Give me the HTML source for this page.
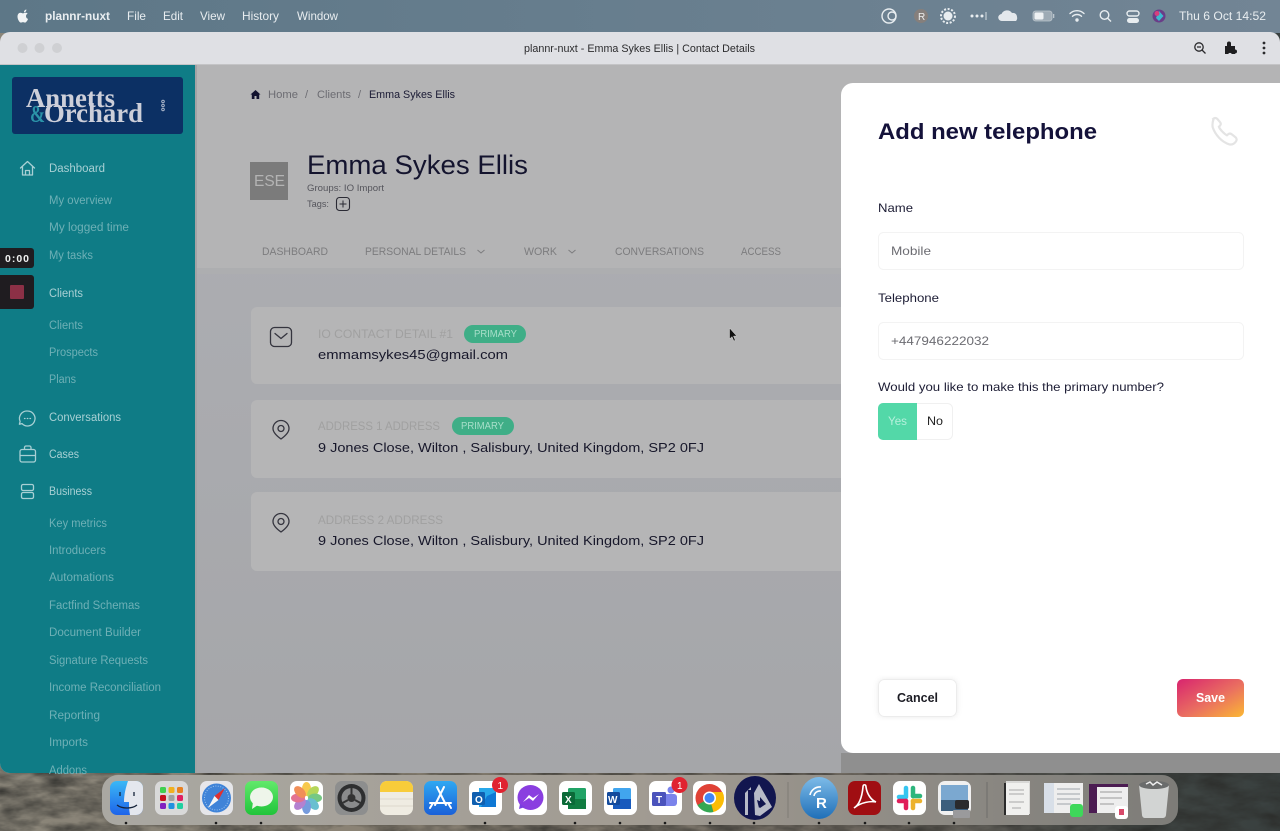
<!DOCTYPE html>
<html lang="en"><head><meta charset="utf-8"><title>plannr-nuxt - Emma Sykes Ellis | Contact Details</title>
<style>
html,body{margin:0;padding:0;width:1280px;height:831px;overflow:hidden;background:#555}
svg{display:block}
text{font-family:"Liberation Sans",sans-serif}
.m{font-size:12px;fill:#e8edf0}
.s1{font-size:11.5px;fill:#a8d0d4}
.s2{font-size:11.5px;fill:#6eb0b6}
.tab{font-size:11px;fill:#7c7c7e}
.lab{font-size:11.5px;fill:#a0a0a0}
.val{font-size:13px;fill:#17172a}
.bad{font-size:10px;fill:#a8dfca}
.f{font-size:12px;fill:#1c1c34}
.ph{font-size:12px;fill:#6c6c72}
.ic{fill:none;stroke:#a8d0d4;stroke-width:1.3;stroke-linejoin:round;stroke-linecap:round}
.ic2{fill:none;stroke:#35353f;stroke-width:1.3;stroke-linejoin:round;stroke-linecap:round}
.mi{fill:none;stroke:#e8edf0;stroke-width:1.4}
</style></head><body>
<svg width="1280" height="831" viewBox="0 0 1280 831" xmlns="http://www.w3.org/2000/svg">
<defs>
<linearGradient id="bar" x1="0" x2="1" y1="0" y2="0"><stop offset="0" stop-color="#5d7787"/><stop offset="1" stop-color="#728595"/></linearGradient>
<linearGradient id="wall" x1="0" x2="1" y1="0" y2="0"><stop offset="0" stop-color="#8a8579"/><stop offset=".3" stop-color="#8a8274"/><stop offset=".7" stop-color="#6d675f"/><stop offset=".9" stop-color="#3f4543"/><stop offset="1" stop-color="#39403f"/></linearGradient>
<linearGradient id="dock" x1="0" x2="1" y1="0" y2="0"><stop offset="0" stop-color="#aaa8a2"/><stop offset=".5" stop-color="#a19b92"/><stop offset="1" stop-color="#7d7c78"/></linearGradient>
<linearGradient id="main" x1="0" x2="0" y1="0" y2="1"><stop offset="0" stop-color="#aeafb4"/><stop offset="1" stop-color="#a5a6a9"/></linearGradient>
<linearGradient id="save" x1="0" x2="1" y1="0" y2="1"><stop offset="0" stop-color="#d8246f"/><stop offset=".55" stop-color="#ea7060"/><stop offset="1" stop-color="#fbb833"/></linearGradient>
<linearGradient id="finder" x1="0" x2="0" y1="0" y2="1"><stop offset="0" stop-color="#3bb8f5"/><stop offset="1" stop-color="#1d63ea"/></linearGradient>
<linearGradient id="grn" x1="0" x2="0" y1="0" y2="1"><stop offset="0" stop-color="#62e96b"/><stop offset="1" stop-color="#20c43a"/></linearGradient>
<linearGradient id="appst" x1="0" x2="0" y1="0" y2="1"><stop offset="0" stop-color="#2fa8f2"/><stop offset="1" stop-color="#1a60d8"/></linearGradient>
<linearGradient id="rr" x1="0" x2="0" y1="0" y2="1"><stop offset="0" stop-color="#7dbbe8"/><stop offset="1" stop-color="#1f6fb8"/></linearGradient>
<filter id="rock" x="0" y="0" width="100%" height="100%" color-interpolation-filters="sRGB"><feTurbulence type="fractalNoise" baseFrequency=".03 .08" numOctaves="4" seed="4"/><feColorMatrix values="0 0 0 0 .16  0 0 0 0 .16  0 0 0 0 .15  .9 .9 0 0 -.6"/></filter>
<filter id="sh" x="-10%" y="-10%" width="120%" height="120%"><feDropShadow dx="0" dy="0" stdDeviation="3" flood-color="#000" flood-opacity=".08"/></filter>
</defs>

<!-- wallpaper -->
<rect width="1280" height="831" fill="url(#wall)"/>
<rect y="760" width="1280" height="71" filter="url(#rock)"/>
<!-- menu bar -->
<rect width="1280" height="33" fill="url(#bar)"/>
<path d="M25.100 12.300c.8-1 1.300-1.400 1.300-2.800-1.300.2-2.500 1.300-2.400 2.800.4.100.8 0 1.100 0zM25.500 12.800c-1.100 0-1.700.6-2.500.6-.9 0-1.600-.6-2.500-.6-1.800 0-3 1.700-3 3.800 0 2.700 2 6 3.500 6 .7 0 1.200-.5 2-.5s1.200.5 2 .5c1.200 0 2.600-2.200 3-3.700-1.300-.5-2-1.500-2-2.800 0-1.200.7-2 1.600-2.600-.6-.7-1.500-.7-2.100-.7z" fill="#f2f4f5"/>
<text x="45" y="20" class="m" style="font-weight:700" textLength="65" lengthAdjust="spacingAndGlyphs">plannr-nuxt</text>
<text x="127" y="20" class="m" textLength="19" lengthAdjust="spacingAndGlyphs">File</text>
<text x="163" y="20" class="m" textLength="20" lengthAdjust="spacingAndGlyphs">Edit</text>
<text x="200" y="20" class="m" textLength="25" lengthAdjust="spacingAndGlyphs">View</text>
<text x="242" y="20" class="m" textLength="37" lengthAdjust="spacingAndGlyphs">History</text>
<text x="297" y="20" class="m" textLength="41" lengthAdjust="spacingAndGlyphs">Window</text>

<g>
<circle cx="889" cy="16" r="7" class="mi"/><circle cx="892" cy="16" r="4" class="mi"/>
<circle cx="921" cy="16" r="7" fill="#857f7c"/><text x="918" y="20" font-size="10" fill="#eee">R</text>
<circle cx="948" cy="16" r="4.500" fill="#e8edf0"/><circle cx="948" cy="16" r="7" fill="none" stroke="#e8edf0" stroke-width="2" stroke-dasharray="2 1.600"/>
<circle cx="972" cy="16" r="1.500" fill="#e8edf0"/><circle cx="977" cy="16" r="1.500" fill="#e8edf0"/><circle cx="982" cy="16" r="1.500" fill="#e8edf0"/><rect x="985.500" y="12" width="1" height="8" fill="#d5dde2"/>
<path d="M1002 21a3.500 3.500 0 0 1-.5-7 6 6 0 0 1 10.500-1 4 4 0 0 1 5 4 4 4 0 0 1-1 4z" fill="#e4e8ec"/>
<rect x="1033" y="11" width="19" height="10" rx="2.500" fill="#9eabb5" stroke="#bcc6cd" stroke-width=".8"/><rect x="1034.500" y="12.500" width="9" height="7" rx="1.500" fill="#eef1f3"/><rect x="1053" y="14" width="1.300" height="4" fill="#bcc6cd"/>
<path d="M1070 13.500a10 10 0 0 1 14 0M1072.500 16.300a6.500 6.500 0 0 1 9 0" class="mi" stroke-linecap="round"/><circle cx="1077" cy="20" r="1.700" fill="#e8edf0"/>
<circle cx="1104.500" cy="15" r="4.300" class="mi"/><path d="M1107.700 18.200l3.300 3.300" class="mi"/>
<rect x="1127" y="11" width="12" height="5" rx="2.500" class="mi"/><rect x="1127" y="18" width="12" height="5" rx="2.500" fill="#e8edf0"/>
<circle cx="1159" cy="16" r="6.500" fill="#6a3d88"/><path d="M1159 11l4.500 5-4.500 5-3-3z" fill="#3dbad0"/><circle cx="1157" cy="13.500" r="2.500" fill="#d63f7e"/>
<text x="1179" y="20" class="m" textLength="87" lengthAdjust="spacingAndGlyphs" style="font-size:11.500px">Thu 6 Oct  14:52</text>
</g>

<!-- window -->
<path d="M0 42a10 10 0 0 1 10-10H1270a10 10 0 0 1 10 10V765a8 8 0 0 1-8 8H10a10 10 0 0 1-10-10z" fill="#dfe0e4"/>
<rect y="64" width="1280" height="1" fill="#c4c4c6"/>
<circle cx="22.500" cy="48" r="5" fill="#cfd0d3"/><circle cx="39.500" cy="48" r="5" fill="#cfd0d3"/><circle cx="57" cy="48" r="5" fill="#cfd0d3"/>
<text x="524" y="52" font-size="11" fill="#2c2c2e" textLength="231" lengthAdjust="spacingAndGlyphs">plannr-nuxt - Emma Sykes Ellis | Contact Details</text>
<g fill="none" stroke="#2a2a2c" stroke-width="1.300"><circle cx="1199" cy="47" r="4.200"/><path d="M1202 50l3.500 3.500M1197 47h4"/></g>
<path d="M1225 46h2v-2.500a2 2 0 0 1 4 0V46h4v3.500a2 2 0 0 1 0 4V54h-3.200a2 2 0 0 0-3.600 0H1225z" fill="#1e1e20"/>
<circle cx="1264" cy="43" r="1.400" fill="#2a2a2c"/><circle cx="1264" cy="48" r="1.400" fill="#2a2a2c"/><circle cx="1264" cy="53" r="1.400" fill="#2a2a2c"/>

<!-- main -->
<path d="M195 65H1280V765a8 8 0 0 1-8 8H195z" fill="url(#main)"/>
<rect x="195" y="65" width="1085" height="203" fill="#b4b4b5"/>
<rect x="195" y="268" width="646" height="6" fill="#adaeb0"/>
<!-- sidebar -->
<path d="M0 65H195V773H10a10 10 0 0 1-10-10z" fill="#0f7c86"/>
<rect x="195" y="65" width="2" height="708" fill="#a3a3a5"/>
<rect x="12" y="77" width="171" height="57" rx="3" fill="#0c3064"/>
<text x="26" y="107" font-size="27" font-weight="700" style="font-family:'Liberation Serif',serif" fill="#cdcfd9" textLength="89" lengthAdjust="spacingAndGlyphs">Annetts</text>
<text x="30" y="122" font-size="24" font-weight="700" style="font-family:'Liberation Serif',serif" fill="#2b93a8" textLength="15" lengthAdjust="spacingAndGlyphs">&amp;</text>
<text x="44" y="122" font-size="27" font-weight="700" style="font-family:'Liberation Serif',serif" fill="#cdcfd9" textLength="99" lengthAdjust="spacingAndGlyphs">Orchard</text>
<g fill="none" stroke="#b9c2d2" stroke-width=".9"><circle cx="163" cy="101.500" r="1.300"/><circle cx="163" cy="105.500" r="1.300"/><circle cx="163" cy="109.500" r="1.300"/></g>

<path d="M20.500 168l7-6.500 7 6.500M22.500 166.500V175h10v-8.500M25.500 175v-4.500h4V175" class="ic"/>
<path d="M27.500 411a7.500 7.500 0 1 1-5.500 12.600l-2.600.6.7-2.700A7.500 7.500 0 0 1 27.500 411z" class="ic"/><path d="M24.500 418.500h.5M27.300 418.500h.5M30 418.500h.5" class="ic"/>
<path d="M20 451.500a2 2 0 0 1 2-2h11.500a2 2 0 0 1 2 2v8.500a2 2 0 0 1-2 2H22a2 2 0 0 1-2-2zM24.500 449.500v-2a1.500 1.500 0 0 1 1.500-1.500h3.500a1.500 1.500 0 0 1 1.500 1.500v2M20 455.500h15.500" class="ic"/>
<rect x="21.500" y="484.500" width="12" height="6" rx="1.500" class="ic"/><rect x="21.500" y="492.500" width="12" height="6" rx="1.500" class="ic"/>

<text x="49" y="172" class="s1" textLength="56" lengthAdjust="spacingAndGlyphs">Dashboard</text>
<text x="49" y="204" class="s2" textLength="63" lengthAdjust="spacingAndGlyphs">My overview</text>
<text x="49" y="231" class="s2" textLength="80" lengthAdjust="spacingAndGlyphs">My logged time</text>
<text x="49" y="259" class="s2" textLength="44" lengthAdjust="spacingAndGlyphs">My tasks</text>
<text x="49" y="297" class="s1" textLength="34" lengthAdjust="spacingAndGlyphs">Clients</text>
<text x="49" y="329" class="s2" textLength="34" lengthAdjust="spacingAndGlyphs">Clients</text>
<text x="49" y="356" class="s2" textLength="49" lengthAdjust="spacingAndGlyphs">Prospects</text>
<text x="49" y="383" class="s2" textLength="27" lengthAdjust="spacingAndGlyphs">Plans</text>
<text x="49" y="421" class="s1" textLength="72" lengthAdjust="spacingAndGlyphs">Conversations</text>
<text x="49" y="458" class="s1" textLength="30" lengthAdjust="spacingAndGlyphs">Cases</text>
<text x="49" y="495" class="s1" textLength="43" lengthAdjust="spacingAndGlyphs">Business</text>
<text x="49" y="527" class="s2" textLength="58" lengthAdjust="spacingAndGlyphs">Key metrics</text>
<text x="49" y="554" class="s2" textLength="57" lengthAdjust="spacingAndGlyphs">Introducers</text>
<text x="49" y="581" class="s2" textLength="65" lengthAdjust="spacingAndGlyphs">Automations</text>
<text x="49" y="609" class="s2" textLength="91" lengthAdjust="spacingAndGlyphs">Factfind Schemas</text>
<text x="49" y="636" class="s2" textLength="92" lengthAdjust="spacingAndGlyphs">Document Builder</text>
<text x="49" y="664" class="s2" textLength="99" lengthAdjust="spacingAndGlyphs">Signature Requests</text>
<text x="49" y="691" class="s2" textLength="112" lengthAdjust="spacingAndGlyphs">Income Reconciliation</text>
<text x="49" y="719" class="s2" textLength="51" lengthAdjust="spacingAndGlyphs">Reporting</text>
<text x="49" y="746" class="s2" textLength="39" lengthAdjust="spacingAndGlyphs">Imports</text>
<text x="49" y="774" class="s2" textLength="38" lengthAdjust="spacingAndGlyphs">Addons</text>

<!-- recorder overlay -->
<rect x="-4" y="248" width="38" height="20" rx="3" fill="#1f1c20"/>
<text x="5" y="262" font-size="10.500" font-weight="700" fill="#f0f0f0" textLength="24">0:00</text>
<rect x="-4" y="275" width="38" height="34" rx="3" fill="#1f1c20"/>
<rect x="10" y="285" width="14" height="14" rx="1" fill="#8c3046"/>

<!-- breadcrumb -->
<path d="M250.500 94.500l5-4.500 5 4.500h-1.300V99h-2.700v-3h-2v3h-2.700v-4.500z" fill="#13132f"/>
<text x="268" y="98" font-size="11" fill="#6c6c72" textLength="30" lengthAdjust="spacingAndGlyphs">Home</text>
<text x="305" y="98" font-size="11" fill="#6c6c72">/</text>
<text x="317" y="98" font-size="11" fill="#6c6c72" textLength="34" lengthAdjust="spacingAndGlyphs">Clients</text>
<text x="358" y="98" font-size="11" fill="#6c6c72">/</text>
<text x="369" y="98" font-size="11" fill="#1a1a34" textLength="86" lengthAdjust="spacingAndGlyphs">Emma Sykes Ellis</text>
<!-- header -->
<rect x="250" y="162" width="38" height="38" fill="#7b7b7b"/>
<text x="254" y="186" font-size="15.500" fill="#b4b4b4" textLength="31" lengthAdjust="spacingAndGlyphs">ESE</text>
<text x="307" y="174" font-size="27" fill="#14142e" textLength="221" lengthAdjust="spacingAndGlyphs">Emma Sykes Ellis</text>
<text x="307" y="191" font-size="9.500" fill="#55555c" textLength="77" lengthAdjust="spacingAndGlyphs">Groups: IO Import</text>
<text x="307" y="207" font-size="9.500" fill="#55555c" textLength="22" lengthAdjust="spacingAndGlyphs">Tags:</text>
<rect x="336.500" y="197.500" width="13" height="13" rx="3" fill="none" stroke="#2a2a34" stroke-width="1.100"/>
<path d="M343 200.500v7M339.500 204h7" stroke="#2a2a34" stroke-width="1"/>
<!-- tabs -->
<text x="262" y="255" class="tab" textLength="66" lengthAdjust="spacingAndGlyphs">DASHBOARD</text>
<text x="365" y="255" class="tab" textLength="101" lengthAdjust="spacingAndGlyphs">PERSONAL DETAILS</text>
<path d="M477.500 250l3.500 3 3.500-3" fill="none" stroke="#7c7c7e"/>
<text x="524" y="255" class="tab" textLength="33" lengthAdjust="spacingAndGlyphs">WORK</text>
<path d="M568.500 250l3.500 3 3.500-3" fill="none" stroke="#7c7c7e"/>
<text x="615" y="255" class="tab" textLength="89" lengthAdjust="spacingAndGlyphs">CONVERSATIONS</text>
<text x="741" y="255" class="tab" textLength="40" lengthAdjust="spacingAndGlyphs">ACCESS</text>
<!-- cards -->
<rect x="251" y="307" width="600" height="77" rx="6" fill="#b5b5b6"/>
<rect x="251" y="400" width="600" height="78" rx="6" fill="#b5b5b6"/>
<rect x="251" y="492" width="600" height="79" rx="6" fill="#b5b5b6"/>
<rect x="270.500" y="327.500" width="21" height="19" rx="4" class="ic2"/><path d="M275 333.500l6 5 6-5" class="ic2"/>
<path d="M281 420.500a8 8 0 0 1 8 8c0 4.500-4.500 8-8 10.500-3.500-2.500-8-6-8-10.500a8 8 0 0 1 8-8z" class="ic2"/><circle cx="281" cy="428.500" r="3" class="ic2"/>
<path d="M281 513.500a8 8 0 0 1 8 8c0 4.500-4.500 8-8 10.500-3.500-2.500-8-6-8-10.500a8 8 0 0 1 8-8z" class="ic2"/><circle cx="281" cy="521.500" r="3" class="ic2"/>
<text x="318" y="338" class="lab" textLength="135" lengthAdjust="spacingAndGlyphs">IO CONTACT DETAIL #1</text>
<rect x="464" y="325" width="62" height="18" rx="9" fill="#3fae87"/>
<text x="474" y="337" class="bad" textLength="43" lengthAdjust="spacingAndGlyphs">PRIMARY</text>
<text x="318" y="359" class="val" textLength="190" lengthAdjust="spacingAndGlyphs">emmamsykes45@gmail.com</text>
<text x="318" y="430" class="lab" textLength="122" lengthAdjust="spacingAndGlyphs">ADDRESS 1 ADDRESS</text>
<rect x="452" y="417" width="62" height="18" rx="9" fill="#3fae87"/>
<text x="461" y="429" class="bad" textLength="43" lengthAdjust="spacingAndGlyphs">PRIMARY</text>
<text x="318" y="452" class="val" textLength="386" lengthAdjust="spacingAndGlyphs">9 Jones Close, Wilton , Salisbury, United Kingdom, SP2 0FJ</text>
<text x="318" y="524" class="lab" textLength="125" lengthAdjust="spacingAndGlyphs">ADDRESS 2 ADDRESS</text>
<text x="318" y="545" class="val" textLength="386" lengthAdjust="spacingAndGlyphs">9 Jones Close, Wilton , Salisbury, United Kingdom, SP2 0FJ</text>
<!-- cursor -->
<path d="M729.500 328v11l2.500-2.300 1.800 4.300 1.500-.7-1.800-4.200h3.300z" fill="#111" stroke="#ddd" stroke-width=".5"/>

<!-- slide-over panel -->
<rect x="841" y="753" width="439" height="20" fill="#8f8f8f"/>
<path d="M853 83H1280V753H853a12 12 0 0 1-12-12V95a12 12 0 0 1 12-12z" fill="#fff"/>
<text x="878" y="139" font-size="22" font-weight="700" fill="#14123a" textLength="219" lengthAdjust="spacingAndGlyphs">Add new telephone</text>
<path d="M1212.500 119.500c1.500-1.800 3.500-2 4.800-.6l2.800 3.300c1 1.200.8 2.500-.2 3.600l-1 1c1 2.500 5 7 8 8.500l1.200-1c1.200-.9 2.500-1 3.600 0l3.800 3c1.500 1.200 1.500 3 .2 4.500-1.800 2.200-4 3.200-6.500 2.500-7.500-2.300-14-9.500-16.500-17-.6-2.700.2-6.300.8-8.300z" fill="none" stroke="#e4e4e4" stroke-width="2.200"/>
<text x="878" y="212" class="f" textLength="35" lengthAdjust="spacingAndGlyphs">Name</text>
<rect x="878.500" y="232.500" width="365" height="37" rx="5" fill="#fff" stroke="#f3f3f3"/>
<text x="891" y="255" class="ph" textLength="40" lengthAdjust="spacingAndGlyphs">Mobile</text>
<text x="878" y="302" class="f" textLength="61" lengthAdjust="spacingAndGlyphs">Telephone</text>
<rect x="878.500" y="322.500" width="365" height="37" rx="5" fill="#fff" stroke="#f3f3f3"/>
<text x="891" y="345" class="ph" textLength="98" lengthAdjust="spacingAndGlyphs">+447946222032</text>
<text x="878" y="391" class="f" textLength="286" lengthAdjust="spacingAndGlyphs">Would you like to make this the primary number?</text>
<rect x="878.500" y="403.500" width="74" height="36" rx="5" fill="#fff" stroke="#f0f0f0"/>
<path d="M883 403h34v37h-34a5 5 0 0 1-5-5v-27a5 5 0 0 1 5-5z" fill="#53d8a8"/>
<text x="888" y="425" font-size="12" fill="#b5f0dc" textLength="19" lengthAdjust="spacingAndGlyphs">Yes</text>
<text x="927" y="425" font-size="12" fill="#222" textLength="16" lengthAdjust="spacingAndGlyphs">No</text>
<rect x="878.500" y="679.500" width="78" height="37" rx="6" fill="#fff" stroke="#ececec" filter="url(#sh)"/>
<text x="897" y="702" font-size="12.500" font-weight="700" fill="#1c1c24" textLength="41" lengthAdjust="spacingAndGlyphs">Cancel</text>
<rect x="1177" y="679" width="67" height="38" rx="6" fill="url(#save)"/>
<text x="1196" y="702" font-size="12.500" font-weight="700" fill="#fff" textLength="29" lengthAdjust="spacingAndGlyphs">Save</text>

<!-- dock -->
<path d="M118 775H1162a16 16 0 0 1 16 16v18a16 16 0 0 1-16 16H118a16 16 0 0 1-16-16V791a16 16 0 0 1 16-16z" fill="url(#dock)"/>
<rect x="787.500" y="782" width="1" height="36" fill="#7f7b75"/><rect x="986.500" y="782" width="1" height="36" fill="#6f6e6a"/>

<!-- finder -->
<rect x="110" y="781" width="33" height="34" rx="7" fill="url(#finder)"/>
<path d="M128 781h8a7 7 0 0 1 7 7v20a7 7 0 0 1-7 7h-6c-1-5-1-9-1-13h-5c0-8 2-15 4-21z" fill="#e4e7ee"/>
<path d="M117 805c5 4 15 4 20 0M120 792v4M134 792v4" fill="none" stroke="#15233a" stroke-width="1.300"/>
<!-- launchpad -->
<rect x="155" y="781" width="33" height="34" rx="7" fill="#d9d9d9"/>
<g><rect x="160" y="787" width="6" height="6" rx="1.500" fill="#40d050"/><rect x="168.500" y="787" width="6" height="6" rx="1.500" fill="#f0b020"/><rect x="177" y="787" width="6" height="6" rx="1.500" fill="#e88020"/><rect x="160" y="795" width="6" height="6" rx="1.500" fill="#c81020"/><rect x="168.500" y="795" width="6" height="6" rx="1.500" fill="#a0a0a0"/><rect x="177" y="795" width="6" height="6" rx="1.500" fill="#e02060"/><rect x="160" y="803" width="6" height="6" rx="1.500" fill="#8020c0"/><rect x="168.500" y="803" width="6" height="6" rx="1.500" fill="#2090e0"/><rect x="177" y="803" width="6" height="6" rx="1.500" fill="#20d0a0"/></g>
<!-- safari -->
<rect x="200" y="781" width="33" height="34" rx="7" fill="#e6e6ea"/><circle cx="216.500" cy="798" r="14.500" fill="#3f83d8"/><circle cx="216.500" cy="798" r="12" fill="none" stroke="#9cc4ee" stroke-dasharray="1 1.500"/>
<path d="M225 788l-6.500 12-4-4z" fill="#e03030"/><path d="M208 808l6.500-12 4 4z" fill="#f5f5f5"/>
<!-- messages -->
<rect x="245" y="781" width="33" height="34" rx="7" fill="url(#grn)"/><ellipse cx="261.500" cy="797" rx="11.500" ry="9.500" fill="#eef5ea"/><path d="M253 802l-1 7 6-4z" fill="#eef5ea"/>
<!-- photos -->
<rect x="290" y="781" width="33" height="34" rx="7" fill="#fff"/>
<g opacity=".85"><ellipse cx="306.500" cy="789" rx="4.500" ry="7" fill="#f6c02e"/><ellipse cx="313" cy="792" rx="4.500" ry="7" transform="rotate(45 313 792)" fill="#a9cf3e"/><ellipse cx="315" cy="798" rx="7" ry="4.500" fill="#5fbf6e"/><ellipse cx="313" cy="804" rx="4.500" ry="7" transform="rotate(-45 313 804)" fill="#4fb5c8"/><ellipse cx="306.500" cy="807" rx="4.500" ry="7" fill="#5f8ad8"/><ellipse cx="300" cy="804" rx="4.500" ry="7" transform="rotate(45 300 804)" fill="#a86cc8"/><ellipse cx="298" cy="798" rx="7" ry="4.500" fill="#df5a80"/><ellipse cx="300" cy="792" rx="4.500" ry="7" transform="rotate(-45 300 792)" fill="#ee7c3c"/></g>
<!-- system prefs -->
<rect x="335" y="781" width="33" height="34" rx="7" fill="#8d8e8e"/><circle cx="351.500" cy="798" r="14" fill="#2e2f30"/><circle cx="351.500" cy="798" r="10" fill="#8a8b8c"/><circle cx="351.500" cy="798" r="4" fill="#333"/><path d="M351.500 788v6M342.500 803l5.500-3M360.500 803l-5.500-3" stroke="#333" stroke-width="2"/>
<!-- notes -->
<rect x="380" y="781" width="33" height="34" rx="7" fill="#efece2"/><path d="M387 781h19a7 7 0 0 1 7 7v4h-33v-4a7 7 0 0 1 7-7z" fill="#f8cc3a"/><path d="M380 799h33M380 806h33" stroke="#dcd8cc"/>
<!-- appstore -->
<rect x="424" y="781" width="33" height="34" rx="7" fill="url(#appst)"/><path d="M437 787l9 18M444 787l-9 18M430 803h21M448 803l3 5M433 803l-3 5" stroke="#fff" stroke-width="2" stroke-linecap="round" fill="none"/>
<!-- outlook -->
<rect x="469" y="781" width="33" height="34" rx="7" fill="#fff"/><path d="M479 788h17v19h-17z" fill="#28a8ea"/><path d="M487 796l9-4v15h-15z" fill="#0f78d4"/><rect x="472" y="792" width="13" height="13" rx="1.500" fill="#0f5fb0"/><text x="475" y="803" font-size="10" font-weight="700" fill="#fff">O</text>
<circle cx="500" cy="785" r="8" fill="#e02330"/><text x="497.500" y="789" font-size="10" fill="#fff">1</text>
<!-- messenger -->
<rect x="514" y="781" width="33" height="34" rx="7" fill="#fff"/><ellipse cx="530.500" cy="797.500" rx="13" ry="12.500" fill="#8a3ee0"/><path d="M519 809l1-5 5 3z" fill="#7a3ee0"/><path d="M523 802l6-7 4 3 6-4-6 7-4-3z" fill="#fff"/>
<!-- excel -->
<rect x="559" y="781" width="33" height="34" rx="7" fill="#fff"/><rect x="568" y="788" width="18" height="21" rx="1.500" fill="#21a366"/><rect x="568" y="799" width="18" height="10" fill="#107c41"/><rect x="562" y="792" width="13" height="13" rx="1.500" fill="#0b6a38"/><text x="565" y="803" font-size="10" font-weight="700" fill="#fff">X</text>
<!-- word -->
<rect x="604" y="781" width="33" height="34" rx="7" fill="#fff"/><rect x="613" y="788" width="18" height="21" rx="1.500" fill="#41a5ee"/><rect x="613" y="799" width="18" height="10" fill="#185abd"/><rect x="607" y="792" width="13" height="13" rx="1.500" fill="#134a9c"/><text x="608" y="803" font-size="10" font-weight="700" fill="#fff">W</text>
<!-- teams -->
<rect x="649" y="781" width="33" height="34" rx="7" fill="#fff"/><rect x="663" y="794" width="14" height="12" rx="3" fill="#7b83eb"/><circle cx="671" cy="790" r="3.500" fill="#7b83eb"/><rect x="652" y="792" width="14" height="14" rx="1.500" fill="#4b53bc"/><text x="656" y="803" font-size="10" font-weight="700" fill="#fff">T</text>
<circle cx="679.500" cy="785" r="8" fill="#e02330"/><text x="677" y="789" font-size="10" fill="#fff">1</text>
<!-- chrome -->
<rect x="693" y="781" width="33" height="34" rx="7" fill="#fff"/><circle cx="709.500" cy="798" r="14" fill="#e04236"/><path d="M709.500 798l-12 7a14 14 0 0 0 16 7z" fill="#34a853"/><path d="M709.500 798l4 14a14 14 0 0 0 9-20h-13z" fill="#fbbc05"/><circle cx="709.500" cy="798" r="6.500" fill="#fff"/><circle cx="709.500" cy="798" r="5" fill="#4285f4"/>
<!-- nA -->
<ellipse cx="755" cy="798" rx="21" ry="22" fill="#12164f"/><path d="M745 815v-22l6-6v28zM755 815l-1-22 5-9 13 23-12 9zM760 797v11l6-4z" fill="#b7bac7"/><path d="M748 790v25h3v-25zM757 800l8 3-6 5z" fill="#12164f"/>
<!-- R -->
<ellipse cx="819" cy="798" rx="19" ry="21" fill="url(#rr)"/><path d="M810 795a10 10 0 0 1 11-8M814 796a6 6 0 0 1 7-5" fill="none" stroke="#fff" stroke-width="1.600"/><text x="816" y="808" font-size="15" font-weight="700" fill="#fff">R</text>
<!-- acrobat -->
<rect x="848" y="781" width="33" height="34" rx="7" fill="#a00e12"/><path d="M854 808c5-3 8-11 9-21 0-3 3-3 3 0 1 7 5 13 10 15-5-1-15 0-22 6z" fill="none" stroke="#fff" stroke-width="1.600"/>
<!-- slack -->
<rect x="893" y="781" width="33" height="34" rx="7" fill="#fff"/><g stroke-width="4.500" stroke-linecap="round"><path d="M906 788v8" stroke="#36c5f0"/><path d="M899 797h7" stroke="#36c5f0"/><path d="M913 788v8" stroke="#2eb67d"/><path d="M913 796h7" stroke="#2eb67d"/><path d="M913 801v7" stroke="#ecb22e"/><path d="M913 801h7" stroke="#ecb22e"/><path d="M906 801v7" stroke="#e01e5a"/><path d="M899 801h7" stroke="#e01e5a"/></g>
<!-- preview -->
<rect x="938" y="781" width="33" height="34" rx="7" fill="#f0f0f0"/><rect x="941" y="785" width="27" height="26" fill="#7ba8d0"/><rect x="941" y="800" width="27" height="11" fill="#3c5e7c"/><rect x="955" y="800" width="14" height="9" rx="2" fill="#2a2a2c"/><rect x="953" y="810" width="17" height="8" rx="1" fill="#9a9a9c"/>
<!-- docs -->
<rect x="1006" y="781" width="24" height="33" fill="#d8d8d6"/><rect x="1004" y="783" width="25" height="32" fill="#f0f0ee"/><rect x="1004" y="783" width="2" height="32" fill="#2a2a2a"/><path d="M1009 790h15M1009 794h15M1009 802h15M1012 808h9" stroke="#a8a8a8"/>
<rect x="1044" y="783" width="39" height="30" fill="#eeeeee"/><rect x="1044" y="783" width="10" height="30" fill="#d8dfe8"/><path d="M1057 789h23M1057 794h23M1057 799h23M1057 804h14" stroke="#9fa4aa"/><rect x="1070" y="804" width="13" height="13" rx="3" fill="#3ed85a"/>
<rect x="1089" y="784" width="39" height="29" fill="#eee"/><rect x="1089" y="784" width="8" height="29" fill="#4b1c52"/><rect x="1089" y="784" width="39" height="3" fill="#4b1c52"/><path d="M1100 792h22M1100 798h22M1100 804h14" stroke="#999"/><rect x="1115" y="806" width="13" height="13" rx="3" fill="#fff"/><rect x="1119" y="809" width="5" height="6" fill="#d84a6a"/>
<!-- trash -->
<path d="M1139 785h30l-3 30a3 3 0 0 1-3 3h-18a3 3 0 0 1-3-3z" fill="#d2d4d3"/><ellipse cx="1154" cy="785" rx="15" ry="4" fill="#6a6c6c"/><path d="M1146 784l4-2 3 3 4-3 5 3" stroke="#eee" stroke-width="1.500" fill="none"/>
<!-- running dots -->
<g fill="#1a1a1a"><circle cx="126" cy="823" r="1.300"/><circle cx="216" cy="823" r="1.300"/><circle cx="261" cy="823" r="1.300"/><circle cx="485" cy="823" r="1.300"/><circle cx="575" cy="823" r="1.300"/><circle cx="620" cy="823" r="1.300"/><circle cx="665" cy="823" r="1.300"/><circle cx="710" cy="823" r="1.300"/><circle cx="754" cy="823" r="1.300"/><circle cx="819" cy="823" r="1.300"/><circle cx="865" cy="823" r="1.300"/><circle cx="909" cy="823" r="1.300"/><circle cx="954" cy="823" r="1.300"/></g>
</svg>
</body></html>
